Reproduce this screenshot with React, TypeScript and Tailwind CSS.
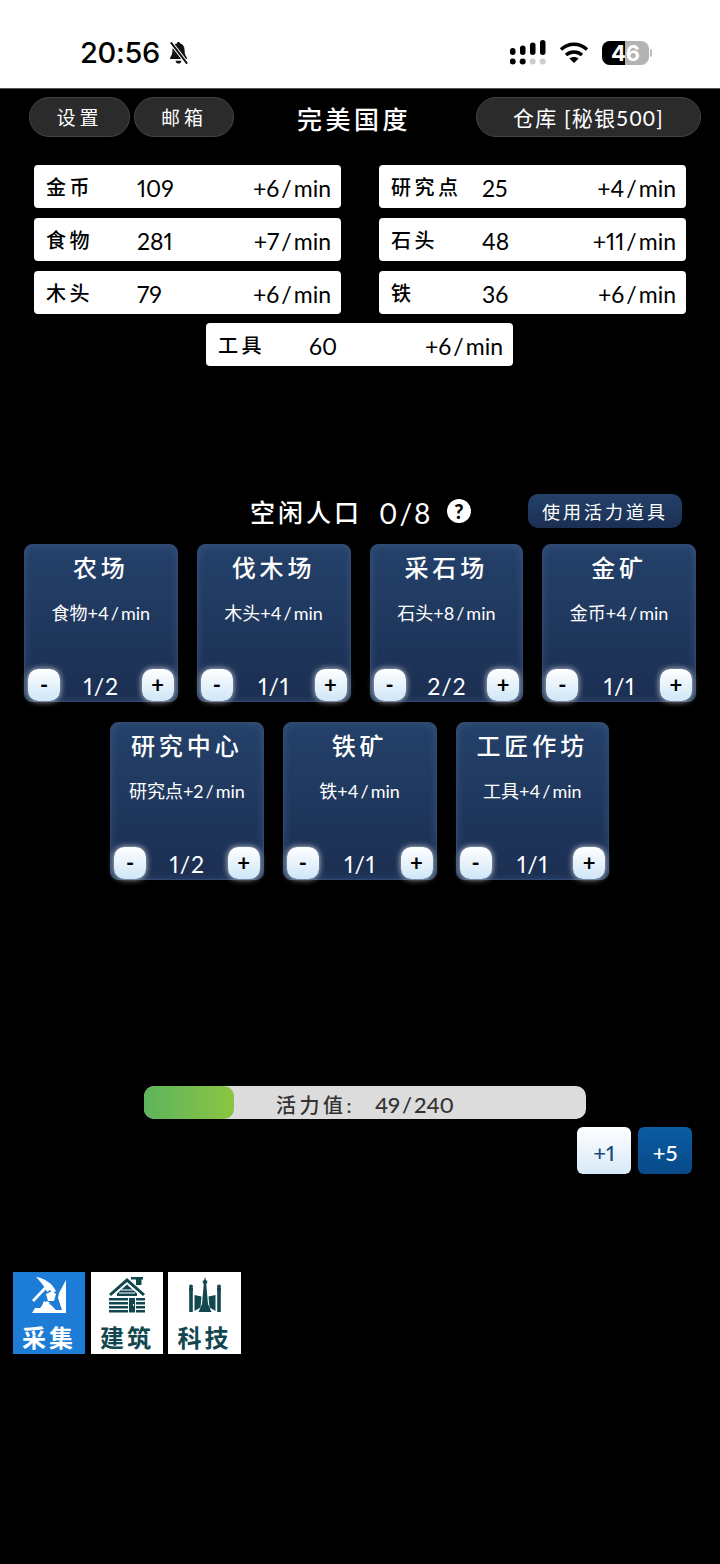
import React from 'react';

const FONT = 'font-["Lato","Noto_Sans_CJK_SC",sans-serif]';

const resources = [
  { name: '金币', value: '109', rate: '+6' },
  { name: '研究点', value: '25', rate: '+4' },
  { name: '食物', value: '281', rate: '+7' },
  { name: '石头', value: '48', rate: '+11' },
  { name: '木头', value: '79', rate: '+6' },
  { name: '铁', value: '36', rate: '+6' },
];

const row1 = [
  { name: '农场', output: '食物+4', count: ['1', '2'] },
  { name: '伐木场', output: '木头+4', count: ['1', '1'] },
  { name: '采石场', output: '石头+8', count: ['2', '2'] },
  { name: '金矿', output: '金币+4', count: ['1', '1'] },
];

const row2 = [
  { name: '研究中心', output: '研究点+2', count: ['1', '2'] },
  { name: '铁矿', output: '铁+4', count: ['1', '1'] },
  { name: '工匠作坊', output: '工具+4', count: ['1', '1'] },
];

const Slash = () => <span className="mx-[2px]">/</span>;

const StatusBar = () => (
  <div className="h-[89px] bg-white flex items-start justify-between pt-[37px] pl-[80px] pr-[68px] border-b border-[#555]">
    <div className="flex items-center gap-[7px]">
      <span className='font-["Inter",sans-serif] text-[29px] leading-[32px] font-medium text-black tracking-[-0.3px]'>20:56</span>
      <svg width="23" height="26" viewBox="0 0 24 26" fill="#111">
        <path d="M12 1.500c1 0 1.600.7 1.700 1.600 3 .8 4.600 3.300 4.600 6.600 0 3.600.7 6 2.500 8.200v1.300H3.200v-1.300c1.800-2.200 2.500-4.600 2.500-8.200 0-3.300 1.600-5.800 4.600-6.600.1-.9.7-1.600 1.700-1.600z" />
        <path d="M9 21h6c0 1.800-1.300 3-3 3s-3-1.200-3-3z" />
        <path d="M4 2 L21 24" stroke="#fff" strokeWidth="4" />
        <path d="M4 2 L21 24" stroke="#111" strokeWidth="2" />
      </svg>
    </div>
    <div className="flex items-center gap-[13px] pt-[3px]">
      <svg width="36" height="26" viewBox="0 0 36 26">
        <rect x="0" y="8" width="5.500" height="7" rx="2.700" fill="#000" />
        <rect x="10" y="5.500" width="5.500" height="9.500" rx="2.700" fill="#000" />
        <rect x="20" y="2.500" width="5.500" height="12.500" rx="2.700" fill="#000" />
        <rect x="30" y="0" width="5.500" height="15" rx="2.700" fill="#000" />
        <circle cx="2.700" cy="21.500" r="3" fill="#000" />
        <circle cx="12.700" cy="21.500" r="3" fill="#000" />
        <circle cx="22.700" cy="21.500" r="3" fill="#ccc" />
        <circle cx="32.700" cy="21.500" r="3" fill="#ccc" />
      </svg>
      <svg width="30" height="24" viewBox="0 0 30 24" fill="none" stroke="#000" strokeWidth="3.400">
        <path d="M2 8.500C9.500 1.500 20.500 1.500 28 8.500" />
        <path d="M7 14c4.600-4 11.400-4 16 0" />
        <path d="M15 22l-4.600-4.600c2.600-2 6.600-2 9.200 0z" fill="#000" stroke="none" />
      </svg>
      <div className="flex items-center">
        <div className='relative w-[47px] h-[24px] rounded-[8px] overflow-hidden bg-[#b3b3b3] flex items-center justify-center font-["Inter",sans-serif] text-[22px] font-bold text-white'>
          <div className="absolute left-0 top-0 bottom-0 w-[49%] bg-black" />
          <span className="relative leading-none">46</span>
        </div>
        <div className="w-[2px] h-[8px] ml-[1px] rounded-r-full bg-[#bbb]" />
      </div>
    </div>
  </div>
);

const PillButton = ({ children, className }: { children: React.ReactNode; className: string }) => (
  <button className={`h-[40px] pt-[2px] rounded-[20px] bg-[#2b2b2b] border border-[#444] text-white flex items-center justify-center whitespace-nowrap ${className}`}>
    {children}
  </button>
);

const ResourceRow = ({ name, value, rate, className = '' }: { name: string; value: string; rate: string; className?: string }) => (
  <div className={`h-[43px] w-[307px] pt-[4px] rounded-[4px] bg-white text-black flex items-center pl-[12px] pr-[10px] proportional-nums ${className}`}>
    <span className="w-[91px] mb-[4px] text-[20px] tracking-[3.500px] font-medium whitespace-nowrap">{name}</span>
    <span className="text-[23px] flex-1">{value}</span>
    <span className="text-[23px]">
      {rate}
      <Slash />
      min
    </span>
  </div>
);

const StepButton = ({ label }: { label: string }) => (
  <button className="w-[32px] h-[32px] rounded-[10px] bg-gradient-to-b from-white to-[#cfe6f7] shadow-[0_0_6px_rgba(255,255,255,0.8)] text-black text-[22px] font-bold leading-none flex items-center justify-center">
    {label}
  </button>
);

const BuildingCard = ({ name, output, count }: { name: string; output: string; count: string[] }) => (
  <div className="w-[153.75px] h-[158px] rounded-[8px] border border-[#2f4a70] bg-gradient-to-b from-[#24416a] to-[#1b2f52] flex flex-col items-center text-white px-[3px] pb-[0px] proportional-nums shadow-[inset_0_0_8px_rgba(120,150,190,0.25)]">
    <div className="mt-[7px] text-[24px] leading-[32px] tracking-[4px] font-medium whitespace-nowrap">{name}</div>
    <div className="mt-[17px] text-[18px] leading-[24px] whitespace-nowrap">
      {output}
      <Slash />
      min
    </div>
    <div className="mt-auto w-full flex items-center justify-between">
      <StepButton label="-" />
      <span className="h-[32px] pt-[1px] text-[23px] leading-[32px]">
        {count[0]}
        <span className="mx-[1px]">/</span>
        {count[1]}
      </span>
      <StepButton label="+" />
    </div>
  </div>
);

const GatherIcon = () => (
  <svg width="34" height="36" viewBox="0 0 34 36">
    <path d="M0 36 L3 31 L9 31 L12 24 L19 28 L24 33 L30 33 L26 21 L27 16 L34 3 L34 36 Z" fill="#fff" />
    <path d="M4 0 C12 1 20 6 24 14 L21 16 L18 13 L15 15 L13 11 C11 8 8 4 4 0 Z" fill="#fff" />
    <path d="M0 23 L16 6 L18 8 L2 25 Z" fill="#fff" />
    <path d="M14 17 L20 14 L24 17 L22 24 L16 24 Z" fill="#fff" />
    <path d="M8 31 L15 24 L18 26 L12 31 Z" fill="#fff" />
  </svg>
);

const HouseIcon = () => (
  <svg width="36" height="36" viewBox="0 0 36 36" fill="#12474f">
    <path d="M22 0h12v2.500h-1.500V8L27 8V2.500h-5z" />
    <path d="M18 1 L36 17 L34 19 L18 5 L2 19 L0 17 Z" />
    <path d="M18 7.500 L28 16.500V19H8V16.500Z" />
    <path d="M12 12.500h12v1H12zM10 15.500h16v1H10z" fill="#fff" />
    <path d="M0 21h19v2.500H0zM0 25h19v2.500H0zM0 29h19v2.500H0zM0 33h19v2.500H0zM27 21h9v2.500h-9zM27 25h9v2.500h-9zM27 29h9v2.500h-9zM27 33h9v2.500h-9z" />
    <path d="M20 21h6v14.500h-6z" />
    <rect x="24" y="27" width="1" height="2" fill="#fff" />
  </svg>
);

const TechIcon = () => (
  <svg width="34" height="35" viewBox="0 0 34 35" fill="#12474f">
    <path d="M17 0l1 3.500h1.200v3h-1L20 27l3.500 8h-13L14 27l1.800-20.500h-1v-3H16z" />
    <path d="M1 11h4v2.500h-.2V35H1.200V13.500H1zM29 11h4v2.500h-.2V35h-3.600V13.500H29z" />
    <circle cx="3" cy="9.500" r="2" />
    <circle cx="31" cy="9.500" r="2" />
    <path d="M6.500 18l7 1.500-1 11-6 3.500zM27.500 18l-7 1.500 1 11 6 3.500z" />
  </svg>
);

const Tab = ({ label, active, icon, className }: { label: string; active?: boolean; icon: React.ReactNode; className: string }) => (
  <div className={`h-[82px] flex flex-col items-center pt-[5px] ${active ? 'bg-[#1c7cd6] text-white' : 'bg-white text-[#12474f]'} ${className}`}>
    <div className="h-[46px] flex items-start justify-center">{icon}</div>
    <div className="text-[24px] leading-[30px] font-bold tracking-[3px] whitespace-nowrap">{label}</div>
  </div>
);

export default function App() {
  return (
    <div className={`w-[720px] h-[1564px] bg-black overflow-hidden ${FONT}`}>
      <StatusBar />

      <div className="flex items-center pt-[8px] pl-[29px] pr-[19px]">
        <PillButton className="w-[101px] text-[19px] tracking-[4px]">设置</PillButton>
        <PillButton className="w-[100px] ml-[4px] text-[19px] tracking-[4px]">邮箱</PillButton>
        <div className="w-[240px] h-[40px] pt-[4px] leading-[36px] text-center text-white text-[25px] tracking-[3.500px] font-medium">完美国度</div>
        <PillButton className="w-[225px] ml-[2px] text-[21px] tracking-[1.200px]">仓库 [秘银500]</PillButton>
      </div>

      <div className="mt-[28px] ml-[34px] grid grid-cols-[307px_307px] gap-x-[38px] gap-y-[10px]">
        {resources.map((r) => (
          <ResourceRow key={r.name} {...r} />
        ))}
      </div>
      <ResourceRow name="工具" value="60" rate="+6" className="mt-[9px] ml-[206px]" />

      <div className="mt-[128px] h-[34px] flex items-center text-white proportional-nums">
        <span className="ml-[250px] pt-[4px] text-[25px] tracking-[3px] font-medium whitespace-nowrap">空闲人口</span>
        <span className="ml-[17px] w-[50px] pt-[3px] text-[28px] whitespace-nowrap">
          0
          <Slash />8
        </span>
        <span className="ml-[18px] w-[24px] h-[24px] rounded-full bg-white text-black text-[20px] leading-none font-black flex items-center justify-center">?</span>
        <button className="ml-[57px] w-[154px] h-[34px] pt-[2px] rounded-[10px] bg-gradient-to-b from-[#24416a] to-[#1b2f52] text-white text-[18px] tracking-[3px] whitespace-nowrap">使用活力道具</button>
      </div>

      <div className="mt-[16px] ml-[24px] flex gap-[19px]">
        {row1.map((b) => (
          <BuildingCard key={b.name} {...b} />
        ))}
      </div>
      <div className="mt-[20px] ml-[110px] flex gap-[19px]">
        {row2.map((b) => (
          <BuildingCard key={b.name} {...b} />
        ))}
      </div>

      <div className="mt-[206px] ml-[144px] relative w-[442px] h-[33px] pt-[4px] rounded-[10px] bg-[#dcdcdc] overflow-hidden flex items-center justify-center text-[#333] text-[20px] font-medium proportional-nums">
        <div className="absolute left-0 top-0 bottom-0 w-[90px] rounded-[10px] bg-gradient-to-r from-[#5cb45a] to-[#8bc441]" />
        <span className="relative tracking-[3.500px] whitespace-nowrap">活力值:</span>
        <span className="relative ml-[20px] text-[22px] whitespace-nowrap">
          49
          <Slash />
          240
        </span>
      </div>

      <div className="mt-[8px] ml-[577px] flex gap-[7px]">
        <button className="w-[54px] h-[47px] pt-[4px] rounded-[6px] bg-gradient-to-b from-white to-[#d7e9f7] text-[#1d4a78] text-[22px] font-medium proportional-nums">+1</button>
        <button className="w-[54px] h-[47px] pt-[4px] rounded-[6px] bg-gradient-to-b from-[#0a5ca3] to-[#084a88] text-white text-[22px] font-medium proportional-nums">+5</button>
      </div>

      <div className="mt-[98px] ml-[13px] flex">
        <Tab label="采集" active icon={<GatherIcon />} className="w-[72px]" />
        <Tab label="建筑" icon={<HouseIcon />} className="w-[72px] ml-[6px]" />
        <Tab label="科技" icon={<TechIcon />} className="w-[73px] ml-[5px]" />
      </div>
    </div>
  );
}
